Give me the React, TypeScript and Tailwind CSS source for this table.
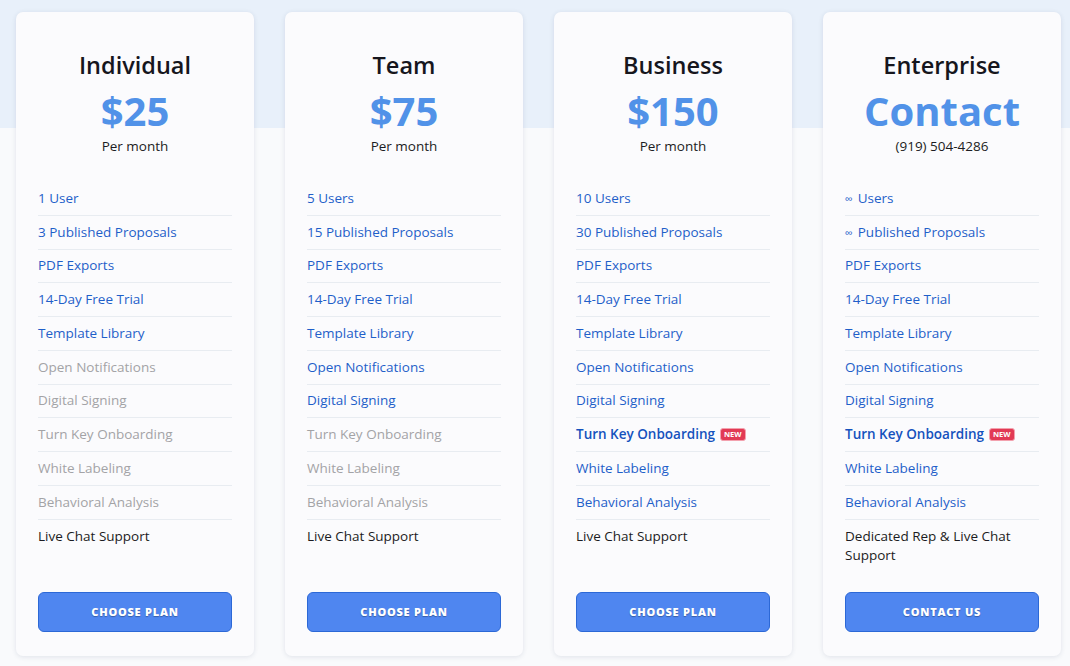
type Tone = 'blue' | 'gray' | 'dark' | 'bold';

type Feature = {
  label: string;
  tone: Tone;
  isNew?: boolean;
  infinity?: boolean;
};

type Plan = {
  name: string;
  price: string;
  sub: string;
  button: string;
  features: Feature[];
};

const f = (label: string, tone: Tone, extra: Partial<Feature> = {}): Feature => ({
  label,
  tone,
  ...extra,
});

const plans: Plan[] = [
  {
    name: 'Individual',
    price: '$25',
    sub: 'Per month',
    button: 'CHOOSE PLAN',
    features: [
      f('1 User', 'blue'),
      f('3 Published Proposals', 'blue'),
      f('PDF Exports', 'blue'),
      f('14-Day Free Trial', 'blue'),
      f('Template Library', 'blue'),
      f('Open Notifications', 'gray'),
      f('Digital Signing', 'gray'),
      f('Turn Key Onboarding', 'gray'),
      f('White Labeling', 'gray'),
      f('Behavioral Analysis', 'gray'),
      f('Live Chat Support', 'dark'),
    ],
  },
  {
    name: 'Team',
    price: '$75',
    sub: 'Per month',
    button: 'CHOOSE PLAN',
    features: [
      f('5 Users', 'blue'),
      f('15 Published Proposals', 'blue'),
      f('PDF Exports', 'blue'),
      f('14-Day Free Trial', 'blue'),
      f('Template Library', 'blue'),
      f('Open Notifications', 'blue'),
      f('Digital Signing', 'blue'),
      f('Turn Key Onboarding', 'gray'),
      f('White Labeling', 'gray'),
      f('Behavioral Analysis', 'gray'),
      f('Live Chat Support', 'dark'),
    ],
  },
  {
    name: 'Business',
    price: '$150',
    sub: 'Per month',
    button: 'CHOOSE PLAN',
    features: [
      f('10 Users', 'blue'),
      f('30 Published Proposals', 'blue'),
      f('PDF Exports', 'blue'),
      f('14-Day Free Trial', 'blue'),
      f('Template Library', 'blue'),
      f('Open Notifications', 'blue'),
      f('Digital Signing', 'blue'),
      f('Turn Key Onboarding', 'bold', { isNew: true }),
      f('White Labeling', 'blue'),
      f('Behavioral Analysis', 'blue'),
      f('Live Chat Support', 'dark'),
    ],
  },
  {
    name: 'Enterprise',
    price: 'Contact',
    sub: '(919) 504-4286',
    button: 'CONTACT US',
    features: [
      f('Users', 'blue', { infinity: true }),
      f('Published Proposals', 'blue', { infinity: true }),
      f('PDF Exports', 'blue'),
      f('14-Day Free Trial', 'blue'),
      f('Template Library', 'blue'),
      f('Open Notifications', 'blue'),
      f('Digital Signing', 'blue'),
      f('Turn Key Onboarding', 'bold', { isNew: true }),
      f('White Labeling', 'blue'),
      f('Behavioral Analysis', 'blue'),
      f('Dedicated Rep & Live Chat Support', 'dark'),
    ],
  },
];

const toneClass: Record<Tone, string> = {
  blue: 'text-[#1f5fc9]',
  gray: 'text-[#a3a3a6]',
  dark: 'text-[#1c1c22]',
  bold: 'text-[#1552bd] font-semibold',
};

const FeatureRow = ({ feature, last }: { feature: Feature; last: boolean }) => {
  return (
    <li
      className={
        last
          ? 'flex min-h-[33.75px] items-start pt-[7px]'
          : 'flex h-[33.75px] items-center border-b border-[#e8ecf1]'
      }
    >
      <span className={`text-[13.5px] leading-[19px] ${toneClass[feature.tone]}`}>
        {feature.infinity && <span className="mr-[5px] text-[11px]">∞</span>}
        {feature.label}
      </span>
      {feature.isNew && (
        <span className="ml-[5px] rounded-[3px] border border-[#f3a1ae] bg-[#e23a55] px-[3px] text-[7.5px] font-bold leading-[11px] text-white">
          NEW
        </span>
      )}
    </li>
  );
};

const PlanCard = ({ plan }: { plan: Plan }) => {
  return (
    <div className="flex h-[644px] w-[238px] flex-col rounded-[7px] bg-[#fbfbfd] px-[22px] pt-[39px] pb-[24px] shadow-[0_1px_5px_rgba(40,60,100,0.12)]">
      <h2 className="text-center text-[23.5px] leading-[28px] font-semibold text-[#16161d]">
        {plan.name}
      </h2>
      <div className="mt-[9px] text-center text-[40px] leading-[46px] font-bold text-[#5192e8]">
        {plan.price}
      </div>
      <div className="mt-[2px] text-center text-[13.5px] leading-[20px] text-[#1c1c22]">
        {plan.sub}
      </div>
      <ul className="mt-[26px]">
        {plan.features.map((feature, i) => (
          <FeatureRow
            key={feature.label}
            feature={feature}
            last={i === plan.features.length - 1}
          />
        ))}
      </ul>
      <button className="mt-auto h-[40px] w-[194px] rounded-[6px] border border-[#2c68d6] bg-[#4f86f0] pt-px text-[11px] font-extrabold tracking-[0.07em] text-white [text-shadow:0_1px_1px_rgba(0,0,0,0.3)]">
        {plan.button}
      </button>
    </div>
  );
};

export default function App() {
  return (
    <div
      className="h-[666px] w-[1070px] overflow-hidden bg-[linear-gradient(to_bottom,#e8f0fa_0px,#e8f0fa_128px,#f9fafc_128px)]"
      style={{ fontFamily: '"Open Sans", "Noto Sans", sans-serif' }}
    >
      <div className="flex gap-[31px] pt-[12px] pl-[16px]">
        {plans.map((plan) => (
          <PlanCard key={plan.name} plan={plan} />
        ))}
      </div>
    </div>
  );
}
